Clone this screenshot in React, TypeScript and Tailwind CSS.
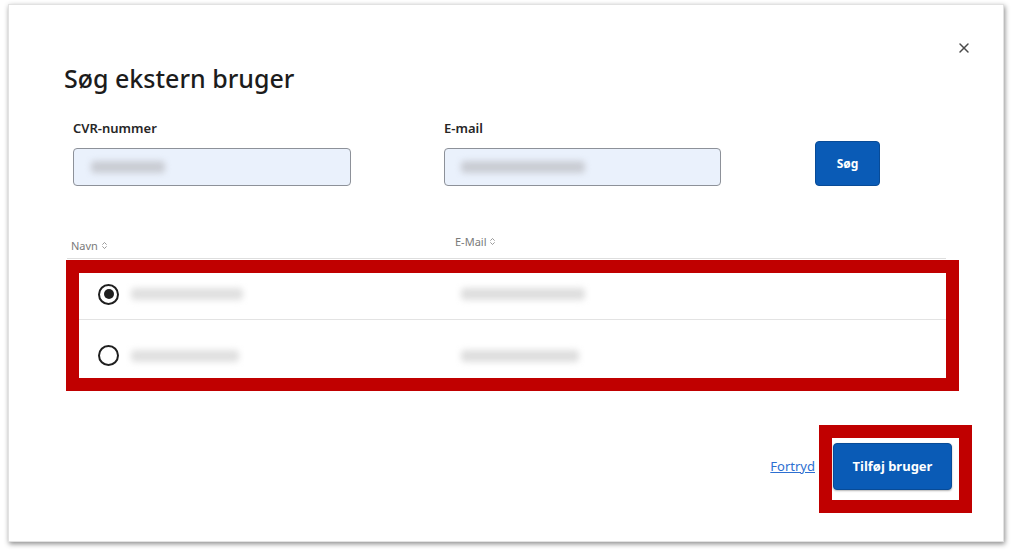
import { X, ChevronsUpDown } from "lucide-react";

const rows = [
  { name: 112, email: 124, checked: true },
  { name: 108, email: 118, checked: false },
];

function Blur({ w, tone = "bg-[#c9ccd3]" }: { w: number; tone?: string }) {
  return <div className={`h-[12px] rounded-sm blur-[3px] ${tone}`} style={{ width: w }} />;
}

function Radio({ checked }: { checked: boolean }) {
  return (
    <div className="w-[21px] h-[21px] rounded-full border-2 border-[#1f1f1f] flex items-center justify-center bg-white">
      {checked && <div className="w-[10px] h-[10px] rounded-full bg-[#1f1f1f]" />}
    </div>
  );
}

export default function App() {
  return (
    <div className="w-[1015px] h-[552px] bg-white pl-[8px] pt-[4px] font-['Noto_Sans',sans-serif]">
      <div className="relative w-[996px] h-[538px] bg-white border border-[#e2e2e2] shadow-[1px_2px_5px_rgba(0,0,0,0.45)]">
        {/* Close */}
        <button className="absolute right-[31px] top-[35px] text-[#4a4a4a]">
          <X className="w-[16px] h-[16px]" strokeWidth={2.2} />
        </button>

        <div className="pl-[55px] pr-[51px] pt-[57px]">
          <h1 className="text-[25px] leading-[32px] font-medium text-[#1c1c1c]">
            Søg ekstern bruger
          </h1>

          {/* Search form */}
          <div className="flex items-end mt-[25px] pl-[9px]">
            <div className="w-[278px]">
              <label className="block text-[13px] leading-[18px] font-semibold text-[#262626]">CVR-nummer</label>
              <div className="mt-[11px] h-[38px] rounded-[4px] border border-[#8d9199] bg-[#eaf1fc] flex items-center pl-[17px]">
                <Blur w={74} />
              </div>
            </div>
            <div className="w-[277px] ml-[93px]">
              <label className="block text-[13px] leading-[18px] font-semibold text-[#262626]">E-mail</label>
              <div className="mt-[11px] h-[38px] rounded-[4px] border border-[#8d9199] bg-[#eaf1fc] flex items-center pl-[16px]">
                <Blur w={124} />
              </div>
            </div>
            <button className="ml-[94px] w-[65px] h-[45px] rounded-[4px] bg-[#0a5bb6] border border-[#084b97] text-white text-[12px] font-bold">
              Søg
            </button>
          </div>

          {/* Table */}
          <div className="mt-[49px] w-[879px] ml-[3px]">
            <div className="flex items-end h-[24px] border-b border-[#dedede] text-[11px] text-[#7a7a7a]">
              <div className="w-[388px] pl-[4px] flex items-center pb-[4px]">
                Navn <ChevronsUpDown className="w-[9px] h-[9px] ml-[2px]" />
              </div>
              <div className="flex items-center pb-[8px]">
                E-Mail <ChevronsUpDown className="w-[9px] h-[9px] ml-[2px]" />
              </div>
            </div>
            {rows.map((r, i) => (
              <div
                key={i}
                className={`flex items-center h-[61px] pt-[10px] ${i === 0 ? "border-b border-[#e3e3e3]" : ""}`}
              >
                <div className="w-[388px] flex items-center pl-[31px] gap-[12px]">
                  <Radio checked={r.checked} />
                  <Blur w={r.name} tone="bg-[#e0e0e0]" />
                </div>
                <div className="pl-[6px]">
                  <Blur w={r.email} tone="bg-[#dedede]" />
                </div>
              </div>
            ))}
          </div>

          {/* Footer */}
          <div className="flex items-center justify-end mt-[62px] gap-[18px]">
            <a href="#" className="text-[13px] text-[#2d6fd1] underline">Fortryd</a>
            <button className="w-[119px] h-[47px] rounded-[4px] bg-[#0a5bb6] border border-[#084b97] text-white text-[13px] font-bold shadow-[0_1px_2px_rgba(0,0,0,0.3)]">
              Tilføj bruger
            </button>
          </div>
        </div>

        {/* Annotation boxes */}
        <div className="absolute left-[57px] top-[255px] w-[893px] h-[131px] border-[13px] border-[#c00000] pointer-events-none" />
        <div className="absolute left-[810px] top-[420px] w-[153px] h-[88px] border-[13px] border-[#c00000] pointer-events-none" />
      </div>
    </div>
  );
}
